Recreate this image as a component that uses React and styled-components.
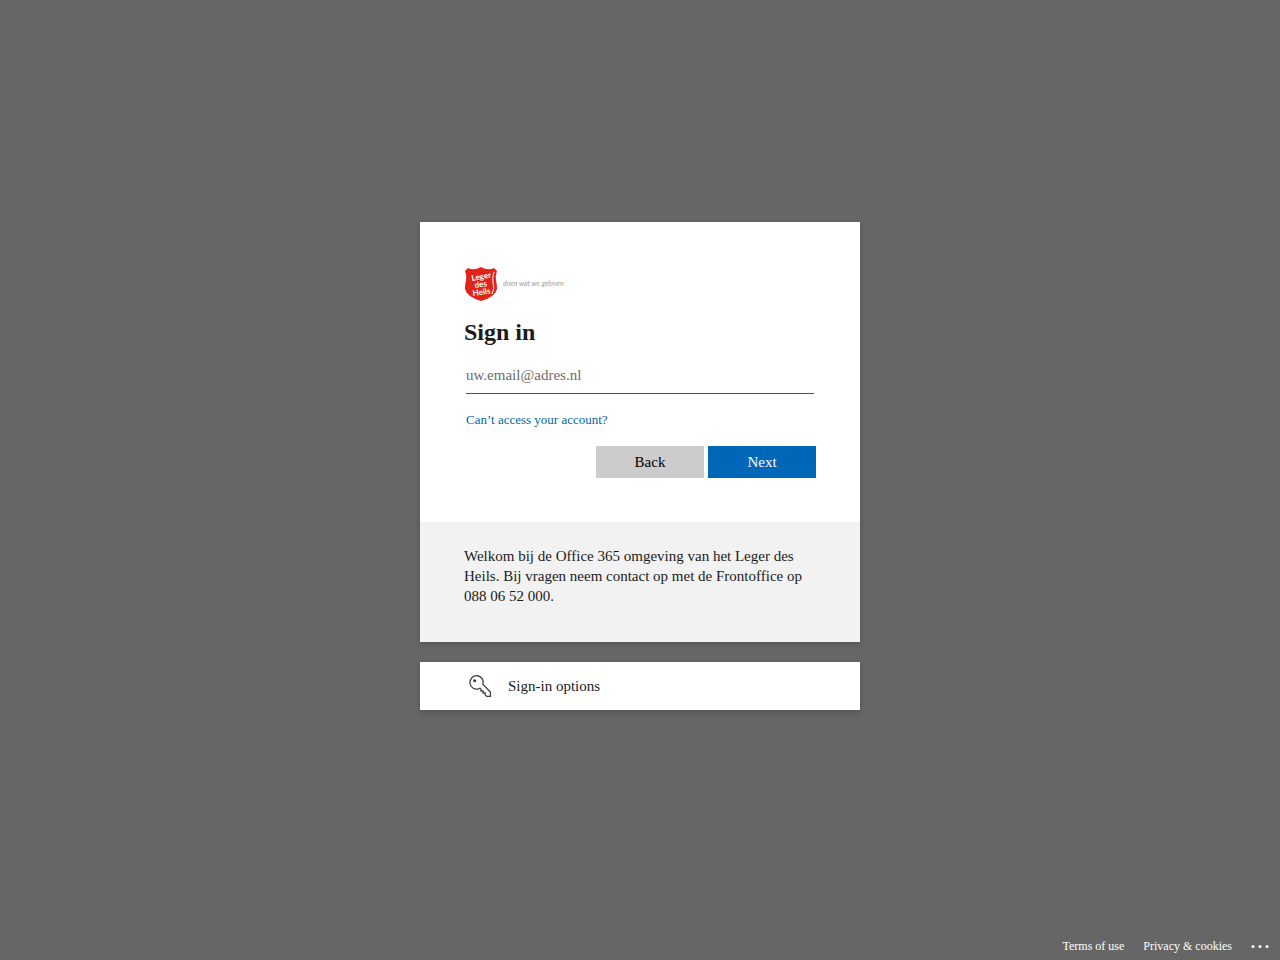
import React, { useState } from 'react';
import styled, { createGlobalStyle } from 'styled-components';

const App = () => {
    const [email, setEmail] = useState('');

    return (
        <>
            <GlobalStyles />
            <Page>
                <Backdrop />
                <Main>
                    <Card>
                        <Form onSubmit={(e) => e.preventDefault()}>
                            <Logo />
                            <Title>Sign in</Title>
                            <EmailInput
                                type="email"
                                aria-label="uw.email@adres.nl"
                                placeholder="uw.email@adres.nl"
                                value={email}
                                onChange={(e) => setEmail(e.target.value)}
                            />
                            <HelpLink href="#">Can’t access your account?</HelpLink>
                            <Buttons>
                                <Button type="button">Back</Button>
                                <Button type="submit" $primary>Next</Button>
                            </Buttons>
                        </Form>
                        <Info>
                            Welkom bij de Office 365 omgeving van het Leger des Heils. Bij vragen neem contact op met de Frontoffice op 088 06 52 000.
                        </Info>
                    </Card>
                    <OptionsButton type="button">
                        <KeyIcon />
                        Sign-in options
                    </OptionsButton>
                </Main>
                <Footer>
                    <FooterLink href="#">Terms of use</FooterLink>
                    <FooterLink href="#">Privacy &amp; cookies</FooterLink>
                    <MoreButton type="button" aria-label="More">
                        <svg width="18" height="4" viewBox="0 0 18 4" fill="#fff">
                            <circle cx="2" cy="2.4" r="1.5" />
                            <circle cx="9" cy="2.4" r="1.5" />
                            <circle cx="16" cy="2.4" r="1.5" />
                        </svg>
                    </MoreButton>
                </Footer>
            </Page>
        </>
    );
};

// Faint shield and slogan behind the sign-in card
const Backdrop = () => (
    <BackdropSvg viewBox="0 0 1280 960" preserveAspectRatio="xMidYMid slice" aria-hidden="true">
        <g fill="none" stroke="#676767" strokeWidth="13">
            <path d="M-78 287L-36 288Q5 319 75 297Q95 290 120 276Q145 292 165 299Q205 313 277 287L310 315Q284 380 296 430Q310 485 312 515Q312 560 278 602Q235 645 120 682Q60 665 -20 620" />
            <path d="M278 333Q250 390 266 450Q282 505 281 540Q276 575 262 592" />
        </g>
        <g fill="#676767" fontFamily="Lato, sans-serif" fontWeight="700" fontSize="90">
            <text transform="translate(10 447) rotate(-11)">Leger</text>
            <text transform="translate(52 518) rotate(-8)">des</text>
            <text transform="translate(28 608) rotate(-8)">Heils</text>
        </g>
        <g fill="#676767" fontFamily="'Liberation Serif', serif" fontWeight="700">
            <text transform="translate(890 475) rotate(-2)" fontSize="200">bent</text>
            <text transform="translate(864 629) rotate(-2)" fontSize="186">t</text>
            <text transform="translate(956 624) rotate(-2)" fontSize="186">allee</text>
        </g>
    </BackdropSvg>
);

const Logo = () => (
    <LogoSvg viewBox="0 0 108 36" role="img" aria-label="Leger des Heils">
        <path d="M1 5L4 2Q10 5 17 1Q24 5 30 2L33 5Q31 10 32 14Q33 19 33 23Q31 31 17 35Q3 31 1 23Q1 19 2 14Q3 10 1 5Z" fill="#e2231a" />
        <path d="M30 6Q28 11 29 16Q31 23 28 28" fill="none" stroke="#fff" strokeWidth="1" />
        <g fill="#fff" fontFamily="Lato, sans-serif" fontWeight="700" fontSize="8">
            <text transform="translate(8 15) rotate(-10)">Leger</text>
            <text transform="translate(11 22) rotate(-8)">des</text>
            <text transform="translate(9 30) rotate(-8)">Heils</text>
        </g>
        <text x="39" y="20" fill="#a0a0a0" fontFamily="Lato, sans-serif" fontStyle="italic" fontSize="7">doen wat we geloven</text>
    </LogoSvg>
);

const KeyIcon = () => (
    <svg width="24" height="24" viewBox="0 0 24 24" fill="none" stroke="#404040" strokeWidth="1.3" aria-hidden="true">
        <path d="M15 10.4A6.7 6.7 0 1 0 10.6 14.8L12 14.2L13 15.2V17H15V19H17.2V21L18.8 22.4H22.4V18Z" />
        <circle cx="6.7" cy="6.7" r="0.9" fill="#404040" />
    </svg>
);

const GlobalStyles = createGlobalStyle`
    * {
        box-sizing: border-box;
    }

    body {
        margin: 0;
        background: #666;
        color: #1b1b1b;
        font-family: 'Liberation Serif', serif;
        font-size: 15px;
        line-height: 20px;
    }

    button, input {
        font: inherit;
    }
`;

const Page = styled.div`
    position: relative;
    display: flex;
    flex-direction: column;
    min-height: 100vh;
    overflow: hidden;
`;

const BackdropSvg = styled.svg`
    position: absolute;
    inset: 0;
    width: 100%;
    height: 100%;
`;

const Main = styled.main`
    position: relative;
    flex: 1;
    display: flex;
    flex-direction: column;
    align-items: center;
    justify-content: center;
    gap: 20px;
`;

const Card = styled.div`
    width: 100%;
    max-width: 440px;
    background: #fff;
    box-shadow: 0 2px 6px rgba(0, 0, 0, 0.2);
`;

const Form = styled.form`
    display: flex;
    flex-direction: column;
    align-items: flex-start;
    padding: 44px;
`;

const LogoSvg = styled.svg`
    width: 108px;
    height: 36px;
`;

const Title = styled.h1`
    margin: 16px 0 12px;
    font-size: 24px;
    font-weight: 700;
    line-height: 28px;
`;

const EmailInput = styled.input`
    align-self: stretch;
    height: 36px;
    margin: 0 2px;
    padding: 0;
    border: 0;
    border-bottom: 1px solid #0f6394;
    border-radius: 0;
    background: transparent;
    color: #1b1b1b;
    outline: none;

    &::placeholder {
        color: #6b6b6b;
    }
`;

const HelpLink = styled.a`
    margin: 18px 2px;
    color: #0067a5;
    font-size: 13px;
    line-height: 16px;
    text-decoration: none;
`;

const Buttons = styled.div`
    display: flex;
    align-self: flex-end;
    gap: 4px;
`;

const Button = styled.button`
    width: 108px;
    height: 32px;
    padding: 0;
    border: 0;
    background: ${props => (props.$primary ? '#0067b8' : '#ccc')};
    color: ${props => (props.$primary ? '#fff' : '#000')};
`;

const Info = styled.div`
    padding: 24px 44px 36px;
    background: #f2f2f2;
`;

const OptionsButton = styled.button`
    display: flex;
    align-items: center;
    gap: 16px;
    width: 100%;
    max-width: 440px;
    height: 48px;
    padding: 0 48px;
    border: 0;
    background: #fff;
    color: #1b1b1b;
    box-shadow: 0 2px 6px rgba(0, 0, 0, 0.2);
`;

const Footer = styled.footer`
    position: relative;
    display: flex;
    align-items: center;
    justify-content: flex-end;
    gap: 19px;
    height: 28px;
    padding-right: 11px;
`;

const FooterLink = styled.a`
    color: #fff;
    font-size: 12px;
    text-decoration: none;
`;

const MoreButton = styled.button`
    display: flex;
    align-items: center;
    height: 28px;
    padding: 0;
    border: 0;
    background: none;
`;

export default App;
